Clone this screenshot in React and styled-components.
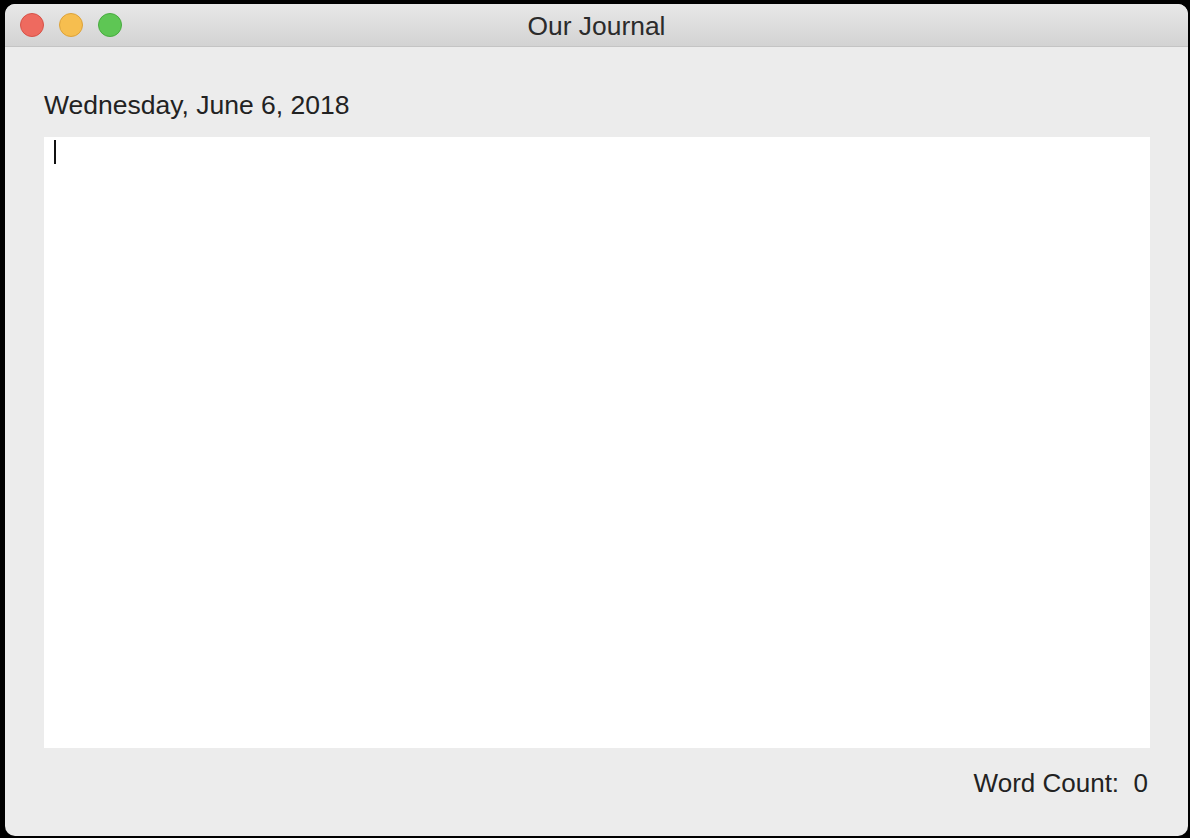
import React from 'react'
import styled, { createGlobalStyle } from 'styled-components'

const Global = createGlobalStyle`
  html, body { margin: 0; height: 100%; background: #000; }
  #root { height: 100%; }
  * { box-sizing: border-box; }
`

const Screen = styled.div`
  height: 838px;
  padding: 4px 2px 2px 5px;
  display: flex;
  font-family: "Liberation Sans", Arial, sans-serif;
`

const Window = styled.div`
  flex: 1;
  display: flex;
  flex-direction: column;
  background: #ececec;
  border-radius: 10px;
  overflow: hidden;
`

const TitleBar = styled.div`
  height: 43px;
  flex: none;
  display: flex;
  align-items: center;
  position: relative;
  background: linear-gradient(#e8e8e8, #d3d3d3);
  border-bottom: 1px solid #c4c4c4;
`

const Lights = styled.div`
  display: flex;
  gap: 15px;
  padding-left: 15px;
`

const Light = styled.span`
  width: 24px;
  height: 24px;
  border-radius: 50%;
  background: ${({ colour }) => colour};
  border: 1px solid ${({ edge }) => edge};
`

const Title = styled.div`
  position: absolute;
  left: 0;
  right: 0;
  padding-top: 2px;
  text-align: center;
  font-size: 26.4px;
  color: #2b2b2b;
  pointer-events: none;
`

const Body = styled.div`
  flex: 1;
  display: flex;
  flex-direction: column;
  padding: 44px 38px 0 39px;
`

const DateLine = styled.div`
  font-size: 26.5px;
  color: #222;
  height: 46px;
  line-height: 28px;
`

const Editor = styled.div`
  height: 611px;
  background: #fff;
  padding: 3px 10px;
`

const Caret = styled.div`
  width: 2px;
  height: 24px;
  background: #111;
`

const Footer = styled.div`
  display: flex;
  justify-content: flex-end;
  padding: 20px 2px 0 0;
  font-size: 26px;
  color: #222;
`

export default function App() {
  return (
    <>
      <Global />
      <Screen>
        <Window>
          <TitleBar>
            <Lights>
              <Light colour="#ee6a5f" edge="#d65248" />
              <Light colour="#f6be4f" edge="#dca23a" />
              <Light colour="#5ec654" edge="#48ab3f" />
            </Lights>
            <Title>Our Journal</Title>
          </TitleBar>
          <Body>
            <DateLine>Wednesday, June 6, 2018</DateLine>
            <Editor>
              <Caret />
            </Editor>
            <Footer>Word Count:&nbsp; 0</Footer>
          </Body>
        </Window>
      </Screen>
    </>
  )
}
